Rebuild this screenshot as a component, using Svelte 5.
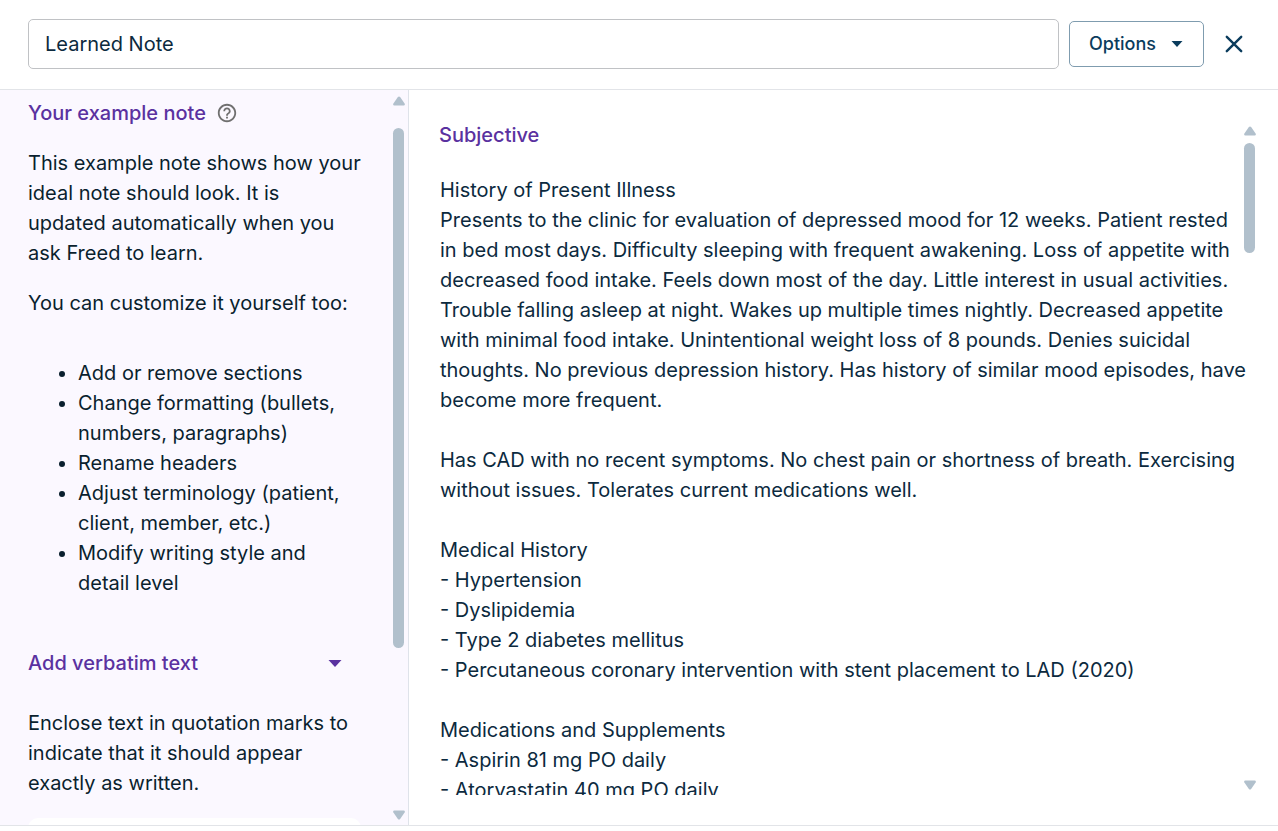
<script lang="ts">
  let title = $state('Learned Note');
  let verbatimOpen = $state(true);

  const tips = [
    'Add or remove sections',
    'Change formatting (bullets, numbers, paragraphs)',
    'Rename headers',
    'Adjust terminology (patient, client, member, etc.)',
    'Modify writing style and detail level',
  ];

  let subjective = $state(`History of Present Illness
Presents to the clinic for evaluation of depressed mood for 12 weeks. Patient rested in bed most days. Difficulty sleeping with frequent awakening. Loss of appetite with decreased food intake. Feels down most of the day. Little interest in usual activities. Trouble falling asleep at night. Wakes up multiple times nightly. Decreased appetite with minimal food intake. Unintentional weight loss of 8 pounds. Denies suicidal thoughts. No previous depression history. Has history of similar mood episodes, have become more frequent.

Has CAD with no recent symptoms. No chest pain or shortness of breath. Exercising without issues. Tolerates current medications well.

Medical History
- Hypertension
- Dyslipidemia
- Type 2 diabetes mellitus
- Percutaneous coronary intervention with stent placement to LAD (2020)

Medications and Supplements
- Aspirin 81 mg PO daily
- Atorvastatin 40 mg PO daily`);
</script>

{#snippet scrollbar()}
  <div class="scrollbar" aria-hidden="true">
    <svg class="arrow" width="12" height="10" viewBox="0 0 12 10"><path d="M4.9 1.1Q6 -.2 7.1 1.1L11.6 7.4Q12.4 9.5 10.6 9.5H1.4Q-.4 9.5.4 7.4Z" /></svg>
    <div class="track"><div class="thumb"></div></div>
    <svg class="arrow down" width="12" height="10" viewBox="0 0 12 10"><path d="M4.9 1.1Q6 -.2 7.1 1.1L11.6 7.4Q12.4 9.5 10.6 9.5H1.4Q-.4 9.5.4 7.4Z" /></svg>
  </div>
{/snippet}

<div class="editor">
  <header>
    <input class="title" type="text" aria-label="Note title" bind:value={title} />
    <button class="options">
      Options
      <svg width="12" height="6" viewBox="0 0 12 6"><path d="M.5 0h11L6 6Z" fill="currentColor" /></svg>
    </button>
    <button class="close" aria-label="Close">
      <svg width="18" height="18" viewBox="0 0 18 18"><path d="M1.8 1.8 16.2 16.2M16.2 1.8 1.8 16.2" fill="none" stroke="currentColor" stroke-width="2.4" stroke-linecap="round" /></svg>
    </button>
  </header>

  <div class="body">
    <aside>
      <div class="guide">
        <h2>
          Your example note
          <button class="help" aria-label="Help">
            <svg width="22" height="22" viewBox="0 0 24 24"><path fill="currentColor" d="M11 18h2v-2h-2v2zm1-16C6.48 2 2 6.48 2 12s4.48 10 10 10 10-4.48 10-10S17.52 2 12 2zm0 18c-4.41 0-8-3.59-8-8s3.59-8 8-8 8 3.59 8 8-3.59 8-8 8zm0-14c-2.21 0-4 1.79-4 4h2c0-1.1.9-2 2-2s2 .9 2 2c0 2-3 1.75-3 5h2c0-2.25 3-2.5 3-5 0-2.21-1.79-4-4-4z" /></svg>
          </button>
        </h2>
        <p>This example note shows how your ideal note should look. It is updated automatically when you ask Freed to learn.</p>
        <p>You can customize it yourself too:</p>
        <ul>
          {#each tips as tip}
            <li>{tip}</li>
          {/each}
        </ul>
        <button class="verbatim" aria-expanded={verbatimOpen} onclick={() => (verbatimOpen = !verbatimOpen)}>
          Add verbatim text
          <svg width="14" height="7" viewBox="0 0 14 7"><path d="M.5 0h13L7 7Z" fill="currentColor" /></svg>
        </button>
        {#if verbatimOpen}
          <p>Enclose text in quotation marks to indicate that it should appear exactly as written.</p>
          <div class="card"></div>
        {/if}
      </div>
      {@render scrollbar()}
    </aside>

    <main>
      <div class="section">
        <label for="subjective">Subjective</label>
        <textarea id="subjective" spellcheck="false" bind:value={subjective}></textarea>
      </div>
      {@render scrollbar()}
    </main>
  </div>
</div>

<style>
  :global(body) {
    margin: 0;
    background: #fff;
  }
  .editor {
    display: flex;
    flex-direction: column;
    box-sizing: border-box;
    height: 100vh;
    padding-bottom: 5px;
    font-family: Inter, sans-serif;
    font-size: 20px;
    line-height: 30px;
    color: #0c2a3e;
  }
  button {
    padding: 0;
    border: none;
    background: none;
    font: inherit;
    color: inherit;
    cursor: pointer;
  }
  svg {
    display: block;
    flex: none;
  }
  header {
    display: flex;
    align-items: center;
    gap: 10px;
    padding: 19px 28px 20px;
    border-bottom: 1px solid #e2e4e8;
  }
  .title {
    flex: 1;
    min-width: 0;
    box-sizing: border-box;
    height: 50px;
    padding: 0 16px;
    border: 1px solid #c0c2c5;
    border-radius: 5px;
    font: inherit;
    color: inherit;
  }
  .options {
    display: flex;
    align-items: center;
    justify-content: space-between;
    box-sizing: border-box;
    width: 135px;
    height: 46px;
    padding: 0 20px 0 19px;
    border: 1px solid #7f9caf;
    border-radius: 5px;
    font-size: 18px;
    font-weight: 500;
    color: #0b3c5d;
  }
  .close {
    display: flex;
    align-items: center;
    justify-content: flex-end;
    width: 36px;
    height: 36px;
    padding-right: 7px;
    color: #0b3c5d;
  }
  .body {
    display: flex;
    flex: 1;
    min-height: 0;
    border-bottom: 1px solid #e2e4e8;
  }
  aside {
    display: flex;
    flex: none;
    box-sizing: border-box;
    width: 409px;
    border-right: 1px solid #dfe3ea;
    background: #fbf8ff;
    color: #0a1f2e;
  }
  .guide {
    flex: 1;
    padding: 8px 32px 0 28px;
    overflow: hidden;
  }
  h2,
  .verbatim,
  label {
    font-size: 20px;
    font-weight: 500;
    color: #5a31a0;
  }
  h2 {
    display: flex;
    align-items: center;
    gap: 10px;
    margin: 0 0 20px;
  }
  .help {
    color: #707070;
  }
  p {
    margin: 0 0 20px;
  }
  ul {
    margin: 40px 0 50px;
    padding-left: 50px;
  }
  .verbatim {
    display: flex;
    align-items: center;
    justify-content: space-between;
    width: 100%;
    margin-bottom: 30px;
    padding-right: 19px;
  }
  .card {
    height: 120px;
    border-radius: 10px;
    background: #fff;
  }
  .scrollbar {
    display: flex;
    flex-direction: column;
    flex: none;
    width: 12px;
  }
  aside .scrollbar {
    margin: 6px 3px 5px 0;
  }
  .arrow {
    fill: #b1c0cc;
  }
  .down {
    transform: rotate(180deg);
  }
  .track {
    flex: 1;
    padding-top: 22px;
  }
  .thumb {
    width: 11px;
    height: 520px;
    border-radius: 6px;
    background: #b1c0cc;
  }
  main {
    display: flex;
    flex: 1;
    min-width: 0;
    padding: 30px 22px 30px 30px;
  }
  .section {
    display: flex;
    flex: 1;
    flex-direction: column;
    min-width: 0;
  }
  label {
    margin-bottom: 25px;
  }
  textarea {
    flex: 1;
    min-height: 0;
    margin-right: -4px;
    padding: 0 0 0 1px;
    border: none;
    outline: none;
    resize: none;
    overflow: hidden;
    background: none;
    font: inherit;
    color: inherit;
  }
  main .scrollbar {
    margin: 6px 0 5px;
  }
  main .track {
    padding-top: 7px;
  }
  main .thumb {
    height: 110px;
  }
</style>
